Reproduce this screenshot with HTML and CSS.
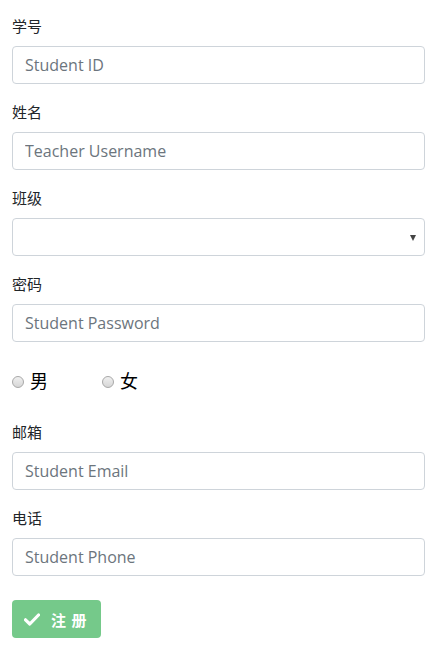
FILE: index.html
```html
<!DOCTYPE html>
<html lang="zh">
<head>
<meta charset="utf-8">
<link rel="stylesheet" href="styles.css">
</head>
<body>
<form class="form">
  <div class="group">
    <label class="label">学号</label>
    <input class="input" type="text" placeholder="Student ID">
  </div>
  <div class="group">
    <label class="label">姓名</label>
    <input class="input" type="text" placeholder="Teacher Username">
  </div>
  <div class="group">
    <label class="label">班级</label>
    <div class="select"><span class="caret"></span></div>
  </div>
  <div class="group">
    <label class="label">密码</label>
    <input class="input" type="text" placeholder="Student Password">
  </div>
  <div class="radios">
    <span class="radio-item"><span class="radio"></span><span class="radio-text">男</span></span>
    <span class="radio-item"><span class="radio"></span><span class="radio-text">女</span></span>
  </div>
  <div class="group">
    <label class="label">邮箱</label>
    <input class="input" type="text" placeholder="Student Email">
  </div>
  <div class="group">
    <label class="label">电话</label>
    <input class="input" type="text" placeholder="Student Phone">
  </div>
  <button class="btn" type="button">
    <svg class="check" width="16" height="13" viewBox="0 0 16 13"><path d="M1.5 6.8 L5.8 11 L14.5 2" fill="none" stroke="#fff" stroke-width="3.2" stroke-linecap="round" stroke-linejoin="round"/></svg>
    <span class="btn-text">注 册</span>
  </button>
</form>
</body>
</html>
```
FILE: styles.css
```css
* { box-sizing: border-box; }
body {
  margin: 0;
  background: #fff;
  font-family: "Open Sans", "Noto Sans CJK SC", sans-serif;
  color: #212529;
}
.form {
  padding: 14px 13px 0 12px;
  display: flex;
  flex-direction: column;
}
.group {
  display: flex;
  flex-direction: column;
  margin-bottom: 16px;
}
.label {
  font-size: 15px;
  line-height: 24px;
  height: 24px;
  margin-bottom: 8px;
  color: #212529;
}
.input, .select {
  height: 38px;
  width: 100%;
  border: 1px solid #ced4da;
  border-radius: 4px;
  padding: 6px 12px;
  font-family: "Open Sans", sans-serif;
  font-size: 16px;
  line-height: 24px;
  color: #495057;
  background: #fff;
  outline: none;
}
.input::placeholder { color: #6c757d; opacity: 1; }
.select {
  display: flex;
  align-items: center;
  justify-content: flex-end;
  padding-right: 8px;
}
.caret {
  width: 0; height: 0;
  border-left: 3.5px solid transparent;
  border-right: 3.5px solid transparent;
  border-top: 6px solid #444;
  margin-top: 2px;
}
.radios {
  height: 46px;
  display: flex;
  align-items: center;
  margin-bottom: 16px;
}
.radio-item {
  display: flex;
  align-items: center;
  width: 90px;
}
.radio {
  width: 12px;
  height: 12px;
  border-radius: 50%;
  border: 1px solid #a8a8a8;
  background: linear-gradient(#f0f0f0, #d6d6d6);
  margin-right: 6px;
  margin-top: 1px;
}
.radio-text {
  font-size: 18px;
  line-height: 24px;
  color: #000;
}
.btn {
  align-self: flex-start;
  width: 89px;
  height: 38px;
  margin-top: 8px;
  border: none;
  border-radius: 4px;
  background: #75c98a;
  color: #fff;
  display: flex;
  align-items: center;
  padding: 0 0 0 12px;
  font-family: "Noto Sans CJK SC", sans-serif;
  font-weight: bold;
  font-size: 15px;
}
.check { margin-right: 11px; }
.btn-text { letter-spacing: 1px; }
```
